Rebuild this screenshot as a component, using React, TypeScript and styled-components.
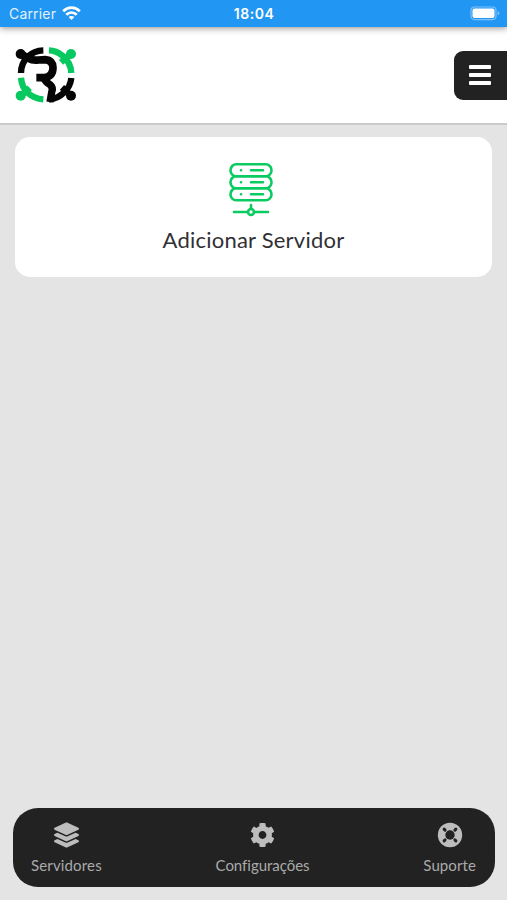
import React from "react";
import styled, { createGlobalStyle } from "styled-components";
import { FaCog, FaLayerGroup } from "react-icons/fa";

const GlobalStyle = createGlobalStyle`
  * { box-sizing: border-box; }
  body { margin: 0; background: #e4e4e4; }
`;

const Screen = styled.div`
  display: flex;
  flex-direction: column;
  height: 900px;
  overflow: hidden;
  background: #e4e4e4;
  font-family: Lato, sans-serif;
`;

const StatusBar = styled.div`
  position: relative;
  z-index: 1;
  display: grid;
  grid-template-columns: 1fr auto 1fr;
  align-items: center;
  flex: none;
  height: 27px;
  padding: 0 6px 0 9px;
  background: #2196f3;
  color: #fff;
  box-shadow: 0 1px 7px rgba(0, 0, 0, 0.45);
  font-family: Inter, sans-serif;
`;

const Carrier = styled.div`
  display: flex;
  align-items: center;
  gap: 6px;
  font-size: 14px;
  line-height: 27px;
  letter-spacing: 0.18px;
  color: #e2f2ff;
`;

const Clock = styled.div`
  padding-right: 2px;
  font-size: 14px;
  font-weight: 600;
  letter-spacing: 0.5px;
  line-height: 27px;
`;

const Battery = styled.svg`
  justify-self: end;
`;

const Header = styled.header`
  display: flex;
  align-items: flex-start;
  justify-content: space-between;
  flex: none;
  height: 98px;
  padding: 19px 0 0 14px;
  background: #fff;
  border-bottom: 2px solid #cbcbcb;
`;

const MenuButton = styled.button`
  display: flex;
  flex-direction: column;
  align-items: flex-start;
  justify-content: center;
  gap: 4px;
  width: 53px;
  height: 49px;
  margin-top: 5px;
  padding: 0 0 2px 15px;
  border: 0;
  border-radius: 9px 0 0 9px;
  background: #222;
`;

const MenuLine = styled.span`
  width: 22px;
  height: 4px;
  border-radius: 1px;
  background: #fff;
`;

const Main = styled.main`
  flex: 1;
  padding: 12px 15px;
`;

const ServerCard = styled.button`
  display: flex;
  flex-direction: column;
  align-items: center;
  width: 100%;
  height: 140px;
  padding: 26px 0 0;
  border: 0;
  border-radius: 15px;
  background: #fff;
`;

const CardTitle = styled.span`
  margin-top: 9px;
  font-family: Lato, sans-serif;
  font-size: 22px;
  line-height: 28px;
  letter-spacing: 0.22px;
  color: #303034;
`;

const BottomNav = styled.nav`
  display: flex;
  justify-content: space-between;
  flex: none;
  height: 79px;
  margin: 0 12px 13px 13px;
  padding: 14px 19px 0 18px;
  border-radius: 25px;
  background: #222;
`;

const NavItem = styled.a<{ $spacing: number }>`
  display: flex;
  flex-direction: column;
  align-items: center;
  gap: 7px;
  color: #aaa;
  font-size: 15px;
  line-height: 20px;
  letter-spacing: ${({ $spacing }) => $spacing}px;
  white-space: nowrap;

  svg {
    display: block;
    height: 26px;
    color: #bdbdbd;
  }
`;

function WifiIcon() {
  return (
    <svg width="19" height="15" viewBox="0 0 19 15" fill="none" stroke="#fff" strokeWidth="2.8">
      <path d="M1.2 5.2C6 .5 13 .5 17.8 5.2" />
      <path d="M4.3 8.8C7.4 5.8 11.6 5.8 14.7 8.8" />
      <path d="M9.5 14 6.6 11.1C8.2 9.5 10.8 9.5 12.4 11.1Z" fill="#fff" stroke="none" />
    </svg>
  );
}

function BatteryIcon() {
  return (
    <Battery width="31" height="15" viewBox="0 0 31 15">
      <rect x="1" y="1" width="25" height="12.6" rx="3.5" fill="none" stroke="#80c1f7" strokeWidth="1.2" />
      <rect x="2.5" y="2.5" width="22" height="9.6" rx="2" fill="#fff" />
      <path d="M27.7 5.3v4c2.4-.7 2.4-3.3 0-4" fill="#80c1f7" />
    </Battery>
  );
}

function Logo() {
  return (
    <svg width="64" height="58" viewBox="24 30 192 174" fill="none">
      <g stroke="#08c95f" strokeWidth="19">
        <path d="M129 43Q151 44 168 58Q194 78 196 111" />
        <path d="M45 125Q47 153 66 171Q84 188 112 190" />
        <path d="M165 79 190 57" />
        <path d="M71 155 47 178" />
      </g>
      <g fill="#08c95f">
        <circle cx="195" cy="54" r="15" />
        <circle cx="44" cy="179" r="15" />
      </g>
      <g stroke="#050505">
        <path d="M112 43Q84 44 65 62Q45 82 45 111" strokeWidth="19" />
        <path d="M44 53 67 67Q80 74 97 72L118 71Q140 73 141 95Q141 120 116 125H91" strokeWidth="23" />
        <path d="M112 124Q118 138 132 146Q143 155 137 169L132 198" strokeWidth="22" />
        <path d="M196 126Q193 152 175 169Q156 188 129 191" strokeWidth="19" />
        <path d="M168 154 195 179" strokeWidth="19" />
      </g>
      <g fill="#050505">
        <circle cx="44" cy="54" r="15" />
        <circle cx="195" cy="179" r="15" />
      </g>
    </svg>
  );
}

const ServerGlyph = styled.svg`
  margin-right: 5px;
`;

function ServerIcon() {
  return (
    <ServerGlyph width="44" height="54" viewBox="0 0 44 54" fill="none" stroke="#0acb61" strokeWidth="2.6" strokeLinecap="round">
      {[1.3, 13.3, 25.3].map((y) => (
        <g key={y}>
          <rect x="1.5" y={y} width="41" height="12" rx="5.8" />
          <path d={`M12 ${y + 6}h.1M22 ${y + 6}h12`} />
        </g>
      ))}
      <path d="M22 42v4M5 49h13M26 49h13" />
      <circle cx="22" cy="49" r="3" />
    </ServerGlyph>
  );
}

function SupportIcon() {
  return (
    <svg width="26" height="26" viewBox="0 0 26 26">
      <circle cx="13" cy="13" r="12.2" fill="currentColor" />
      <circle cx="13" cy="13" r="4.7" fill="#222" />
      <path d="m7.1 7.1 1 1m10.8-1-1 1m-10.8 10.8 1-1m10.8 1-1-1" stroke="#222" strokeWidth="3" strokeLinecap="round" />
    </svg>
  );
}

export default function App() {
  return (
    <Screen>
      <GlobalStyle />
      <StatusBar>
        <Carrier>Carrier <WifiIcon /></Carrier>
        <Clock>18:04</Clock>
        <BatteryIcon />
      </StatusBar>
      <Header>
        <Logo />
        <MenuButton aria-label="Menu">
          <MenuLine />
          <MenuLine />
          <MenuLine />
        </MenuButton>
      </Header>
      <Main>
        <ServerCard>
          <ServerIcon />
          <CardTitle>Adicionar Servidor</CardTitle>
        </ServerCard>
      </Main>
      <BottomNav>
        <NavItem $spacing={0.15}><FaLayerGroup size={25} />Servidores</NavItem>
        <NavItem $spacing={-0.03}><FaCog size={25} />Configurações</NavItem>
        <NavItem $spacing={0.1}><SupportIcon />Suporte</NavItem>
      </BottomNav>
    </Screen>
  );
}
